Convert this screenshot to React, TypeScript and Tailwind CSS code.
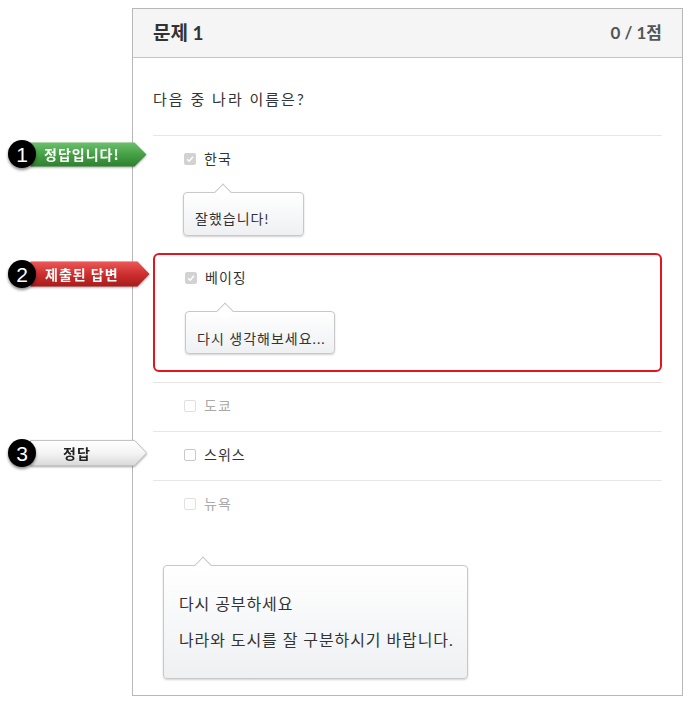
import React from "react";

// --- checkbox (disabled look) ---
const Check = ({ checked, dark }: { checked?: boolean; dark?: boolean }) => (
  <span
    className={`inline-flex items-center justify-center w-[12px] h-[12px] rounded-[2px] shrink-0 ${
      checked
        ? "bg-[#d2d2d2]"
        : dark
          ? "bg-white border border-[#c9c9c9]"
          : "bg-white border border-[#e0e0e0]"
    }`}
  >
    {checked && (
      <svg viewBox="0 0 12 12" className="w-[10px] h-[10px]">
        <path
          d="M2.6 6.3 L5 8.6 L9.6 3.4"
          stroke="#ffffff"
          strokeWidth="1.8"
          fill="none"
        />
      </svg>
    )}
  </span>
);

// --- tooltip bubble with arrow ---
const Tip = ({
  className,
  children,
}: {
  className: string;
  children: React.ReactNode;
}) => (
  <div
    className={`relative rounded-[4px] border border-[#c8c8c8] bg-gradient-to-b from-white to-[#eef0f2] shadow-[0_1px_2px_rgba(0,0,0,0.18)] text-[#333] whitespace-nowrap ${className}`}
  >
    <span className="absolute -top-[7px] left-[33px] w-[12px] h-[12px] rotate-45 bg-white border-l border-t border-[#c8c8c8]" />
    {children}
  </div>
);

// --- numbered ribbon ---
type Variant = "green" | "red" | "white";

const Ribbon = ({
  id,
  w,
  h,
  variant,
}: {
  id: string;
  w: number;
  h: number;
  variant: Variant;
}) => {
  const stops: Record<Variant, string[]> = {
    green: ["#6cc06c", "#45a045", "#2e812e"],
    red: ["#ec5858", "#cc2f2f", "#a81c1c"],
    white: ["#ffffff", "#f4f4f4", "#d9d9d9"],
  };
  const s = stops[variant];
  return (
    <svg width={w} height={h} className="absolute inset-0">
      <defs>
        <linearGradient id={id} x1="0" y1="0" x2="0" y2="1">
          <stop offset="0" stopColor={s[0]} />
          <stop offset="0.5" stopColor={s[1]} />
          <stop offset="1" stopColor={s[2]} />
        </linearGradient>
      </defs>
      <path
        d={`M0.5 0.5 H${w - 12.5} L${w - 0.5} ${h / 2} L${w - 12.5} ${h - 0.5} H0.5 Z`}
        fill={`url(#${id})`}
        stroke={variant === "white" ? "#c4c4c4" : "none"}
      />
    </svg>
  );
};

const Badge = ({
  n,
  label,
  variant,
  className,
  ribbonClass,
  w,
  h,
  textClass,
}: {
  n: number;
  label: string;
  variant: Variant;
  className: string;
  ribbonClass: string;
  w: number;
  h: number;
  textClass: string;
}) => (
  <div className={`absolute w-[142px] h-[29px] ${className}`}>
    <div
      className={`absolute left-[22px] drop-shadow-[0_1px_1px_rgba(0,0,0,0.35)] ${ribbonClass}`}
    >
      <Ribbon id={`rb${n}`} w={w} h={h} variant={variant} />
      <span
        className={`absolute inset-0 flex items-center whitespace-nowrap text-[14px] font-bold tracking-[1px] font-['Noto_Sans_CJK_KR',sans-serif] ${textClass}`}
      >
        {label}
      </span>
    </div>
    <div className="absolute left-0 top-0 w-[28px] h-[28px] rounded-full bg-black flex items-center justify-center text-white text-[21px] leading-none font-['Liberation_Sans',sans-serif] shadow-[0_2px_3px_rgba(0,0,0,0.45)]">
      {n}
    </div>
  </div>
);

const Option = ({
  label,
  checked,
  muted,
  pl,
}: {
  label: string;
  checked?: boolean;
  muted?: boolean;
  pl: string;
}) => (
  <div className={`flex items-center h-[20px] gap-[8px] ${pl}`}>
    <Check checked={checked} dark={!muted && !checked} />
    <span
      className={`text-[14px] leading-[20px] tracking-[1px] ${muted ? "text-[#aaaaaa]" : "text-[#333]"}`}
    >
      {label}
    </span>
  </div>
);

export default function App() {
  return (
    <div className="w-[698px] h-[708px] bg-white pt-[8px] pl-[132px] font-[Lato,'Noto_Sans_CJK_KR',sans-serif]">
      <div className="w-[551px] h-[688px] border border-[#b8b8b8]">
        {/* header */}
        <div className="h-[49px] bg-[#f5f5f5] border-b border-[#c4c4c4] px-[20px] flex items-center justify-between">
          <span className="text-[19px] font-bold text-[#333]">문제 1</span>
          <span className="text-[17px] font-bold text-[#555]">0 / 1점</span>
        </div>

        <div className="px-[20px] pb-[16px]">
          <p className="pt-[30px] pb-[25px] text-[15px] leading-[22px] tracking-[2px] text-[#333]">
            다음 중 나라 이름은?
          </p>

          {/* 1: correct option */}
          <div className="relative border-t border-[#e6e6e6] pt-[13px]">
            <Badge
              n={1}
              label="정답입니다!"
              variant="green"
              className="-left-[145px] top-[4px]"
              ribbonClass="top-[2px] w-[117px] h-[25px]"
              w={117}
              h={25}
              textClass="text-white pl-[14px]"
            />
            <Option label="한국" checked pl="pl-[31px]" />
            <Tip className="mt-[23px] ml-[30px] w-[121px] px-[11px] pt-[16px] pb-[6px] text-[14px] leading-[20px] tracking-[1px]">
              잘했습니다!
            </Tip>
          </div>

          {/* 2: submitted answer */}
          <div className="relative mt-[17px] border-2 border-[#e3161f] rounded-[6px] pt-[13px] pb-[16px]">
            <Badge
              n={2}
              label="제출된 답변"
              variant="red"
              className="-left-[147px] top-[5px]"
              ribbonClass="top-[1px] w-[120px] h-[26px]"
              w={120}
              h={26}
              textClass="text-white pl-[15px]"
            />
            <Option label="베이징" checked pl="pl-[30px]" />
            <Tip className="mt-[23px] ml-[30px] w-[150px] px-[11px] pt-[17px] pb-[4px] text-[14px] leading-[20px] tracking-[1px]">
              다시 생각해보세요...
            </Tip>
          </div>

          <div className="mt-[10px] border-t border-[#e6e6e6] pt-[13px] pb-[15px]">
            <Option label="도쿄" muted pl="pl-[31px]" />
          </div>

          {/* 3: right answer */}
          <div className="relative border-t border-[#e6e6e6] pt-[13px] pb-[15px]">
            <Badge
              n={3}
              label="정답"
              variant="white"
              className="-left-[145px] top-[7px]"
              ribbonClass="top-[1px] w-[117px] h-[26px]"
              w={117}
              h={26}
              textClass="text-[#222] pl-[33px]"
            />
            <Option label="스위스" pl="pl-[31px]" />
          </div>

          <div className="border-t border-[#e6e6e6] pt-[13px]">
            <Option label="뉴욕" muted pl="pl-[31px]" />
          </div>

          <Tip className="mt-[51px] ml-[10px] w-[305px] px-[15px] pt-[27px] pb-[27px] text-[16px] leading-[22px] tracking-[0.9px]">
            <p>다시 공부하세요</p>
            <p className="mt-[14px]">나라와 도시를 잘 구분하시기 바랍니다.</p>
          </Tip>
        </div>
      </div>
    </div>
  );
}
